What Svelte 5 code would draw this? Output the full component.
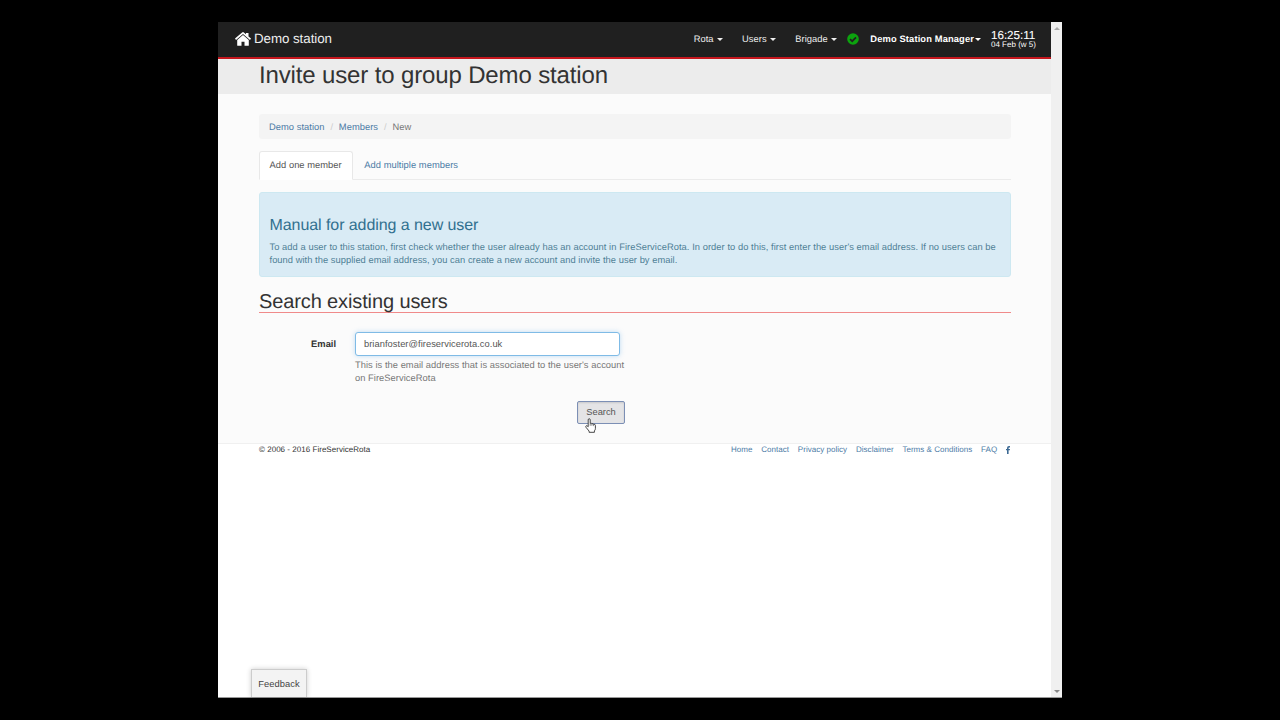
<script lang="ts">
  const menus = ['Rota', 'Users', 'Brigade'];
  const links = ['Home', 'Contact', 'Privacy policy', 'Disclaimer', 'Terms & Conditions', 'FAQ'];
  let email = $state('brianfoster@fireservicerota.co.uk');
</script>

<div class="stage">
  <div class="window">
    <div class="page">
      <header>
        <a class="brand" href="#home">
          <svg class="house" viewBox="0 0 16 14" width="16" height="14">
            <path fill="#fff" d="M8 3 2.2 7.9v5.3q0 .6.6.6h3.7V9.8h3v4h3.7q.6 0 .6-.6V7.9z" />
            <path fill="#fff" d="M8 .1q.5 0 .9.3L11 2.2V1h2.5v3.4L16 6.6l-1 1.3L8 2.1 1 7.9 0 6.6 7.1.4Q7.5.1 8 .1z" />
          </svg>
          <span>Demo station</span>
        </a>
        <nav>
          {#each menus as m}
            <a class="menu {m.toLowerCase()}" href="#{m}">{m}<i class="caret"></i></a>
          {/each}
          <svg class="ok" viewBox="0 0 12 12" width="12" height="12">
            <circle cx="6" cy="6" r="5.8" fill="#0ca30e" />
            <path d="M3 6.1 5.2 8.2 9 4.4" fill="none" stroke="#202020" stroke-width="1.7" />
          </svg>
          <a class="account" href="#account"><span>Demo Station Manager</span><i class="caret"></i></a>
          <div class="clock"><span class="time">16:25:11</span><span class="date">04 Feb (w 5)</span></div>
        </nav>
      </header>

      <div class="title"><h1>Invite user to group Demo station</h1></div>

      <main>
        <ol class="crumbs">
          <li><a href="#station">Demo station</a></li>
          <li class="sep">/</li>
          <li><a href="#members">Members</a></li>
          <li class="sep">/</li>
          <li>New</li>
        </ol>

        <div class="tabs">
          <a class="tab active" href="#one">Add one member</a>
          <a class="tab" href="#multiple">Add multiple members</a>
        </div>

        <section class="info">
          <h3>Manual for adding a new user</h3>
          <p>
            <span class="wide">To add a user to this station, first check whether the user already has an account in FireServiceRota. In order to do this, first enter the user's email address. If no users can be</span><br />
            <span>found with the supplied email address, you can create a new account and invite the user by email.</span>
          </p>
        </section>

        <h2>Search existing users</h2>

        <form>
          <label for="email">Email</label>
          <div class="field">
            <input id="email" type="text" bind:value={email} />
            <p>This is the email address that is associated to the user's account<br />on FireServiceRota</p>
            <div class="action">
              <button type="button">Search</button>
              <svg class="pointer" viewBox="0 0 12 15" width="12" height="15">
                <path d="M3.2 8.8V1.9q0-1.2 1-1.2t1 1.2v3.4q1.3-.5 1.7.5 1.2-.5 1.7.5 1.6-.3 1.8 1.1v3.1q0 1.3-1 2.4v1.4H4.1v-1.2L1 9.3Q.4 8 1.3 7.7q.8-.2 1.9 1.1z" fill="#fff" stroke="#333" stroke-width=".9" stroke-linejoin="round" />
                <path d="M5.2 5.3v2.5M6.9 5.8v2M8.6 6.3v1.8" stroke="#555" stroke-width=".7" />
              </svg>
            </div>
          </div>
        </form>
      </main>

      <footer>
        <span class="copy">© 2006 - 2016 FireServiceRota</span>
        <div class="links">
          {#each links as l}<a href="#{l}">{l}</a>{/each}
          <svg viewBox="0 0 4 8" width="4" height="8"><path fill="#3d6a94" d="M1 8V4.3H0V2.9h1V2Q1 0 3 0h1v1.4h-.8q-.6 0-.6.7v.8H4l-.2 1.4H2.6V8z" /></svg>
        </div>
      </footer>
      <button class="feedback" type="button">Feedback</button>
    </div>
    <div class="scroll">
      <i class="up"></i>
      <i class="down"></i>
    </div>
  </div>
</div>

<style>
  :global(body) { margin: 0; background: #000; }
  .stage {
    box-sizing: border-box; width: 1280px; height: 720px; padding: 22px 0 0 218px;
    background: #000; overflow: hidden;
    font: 9.33px/13.33px "Liberation Sans", Arial, sans-serif; color: #333;
    text-rendering: geometricPrecision;
  }
  * { box-sizing: border-box; }
  a { color: #4c7ba6; text-decoration: none; white-space: nowrap; }
  h1, h2, h3, p, ol { margin: 0; padding: 0; font-weight: normal; }
  .window { display: flex; width: 844px; height: 676px; background: #fff; border-bottom: 1px solid #999; }
  .page { position: relative; width: 833px; display: flex; flex-direction: column; }
  .scroll { width: 11px; background: #f0f0f0; display: flex; flex-direction: column; justify-content: space-between; align-items: center; padding: 5px 0 4px; }
  .up, .down { border: 3px solid transparent; width: 0; height: 0; }
  .up { border-top: 0; border-bottom-color: #aaa; }
  .down { border-bottom: 0; border-top-color: #888; }

  header { height: 37px; flex: none; background: #202020; border-bottom: 2px solid #c5161d; display: flex; justify-content: space-between; padding: 0 14px 0 17px; }
  header a { color: #eee; }
  .brand { display: flex; align-items: center; gap: 3px; font-size: 13.33px; height: 34px; letter-spacing: -.05px; }
  .house { margin: -1px 0 0; }
  nav { display: flex; align-items: center; height: 35px; }
  .menu { display: flex; align-items: center; gap: 3px; margin-right: 19.5px; letter-spacing: .06px; }
  .brigade { margin-right: 10.5px; }
  .ok { margin-top: -1px; }
  .caret { border: 3px solid transparent; border-top-color: currentColor; border-bottom: 0; margin-top: 1px; }
  .account { display: flex; align-items: center; gap: 1px; font-weight: bold; margin: 0 10px 0 11px; color: #fff; letter-spacing: .13px; }
  .clock { color: #fff; display: flex; flex-direction: column; width: 46px; white-space: nowrap; }
  .time { font-size: 11.6px; line-height: 11px; -webkit-text-stroke: .1px #fff; }
  .date { font-size: 8px; line-height: 8px; }

  .title { height: 35px; flex: none; background: #ececec; padding-left: 41px; }
  h1 { font-size: 24px; line-height: 34px; white-space: nowrap; letter-spacing: -.14px; }

  main { height: 350px; flex: none; background: #fbfbfb; border-bottom: 1px solid #f0f0f0; padding: 20px 40px 0 41px; }
  .crumbs { list-style: none; display: flex; background: #f4f4f4; height: 25px; align-items: center; padding: 2px 10px 0; border-radius: 3px; color: #777; letter-spacing: .05px; }
  .sep { color: #ccc; width: 14.3px; text-align: center; }
  .tabs { display: flex; margin-top: 12px; height: 29px; border-bottom: 1px solid #ebebeb; }
  .tab { padding: 7px 10px 0 9.5px; height: 29px; border: 1px solid transparent; border-radius: 3px 3px 0 0; margin-right: 1px; letter-spacing: .05px; }
  .active { background: #fff; border-color: #e8e8e8; border-bottom-color: #fff; color: #555; }
  .info { margin-top: 12px; height: 85px; background: #d9ebf5; border: 1px solid #cde8f1; border-radius: 3px; padding: 24px 9px 0 9.5px; color: #4f7f96; }
  h3 { font-size: 16px; line-height: 18px; color: #31708f; margin-bottom: 6px; letter-spacing: -.07px; }
  .info p { white-space: nowrap; letter-spacing: .04px; }
  .info .wide { letter-spacing: .056px; }
  h2 { margin-top: 14px; height: 22px; font-size: 20px; line-height: 22px; border-bottom: 1px solid #f08a8a; letter-spacing: -.12px; }
  form { display: flex; padding-top: 19px; }
  label { width: 77px; text-align: right; margin-right: 19px; font-weight: bold; line-height: 24px; }
  .field { width: 270px; }
  input { display: block; width: 265px; height: 24px; font: inherit; color: #555; padding: 0 8px; border: 1px solid #7fbbe6; border-radius: 3px; background: #fff; box-shadow: 0 0 5px rgba(102, 175, 233, .4); outline: 0; letter-spacing: .04px; }
  .field p { margin-top: 3px; color: #777; white-space: nowrap; letter-spacing: .045px; }
  .action { position: relative; display: flex; justify-content: flex-end; margin-top: 15px; }
  .action button { width: 48px; height: 23px; font: inherit; color: #555; padding: 1px 0 0; background: #e4e4e6; border: 1px solid #7c8fb5; border-radius: 2px; box-shadow: inset 0 1px 2px rgba(0, 0, 0, .12); }
  .pointer { position: absolute; right: 28px; top: 17px; }
  footer { display: flex; justify-content: space-between; padding: 0 41px; font-size: 8px; line-height: 11px; letter-spacing: .03px; }
  .links { display: flex; align-items: center; gap: 8.8px; }
  .feedback { position: absolute; left: 33px; bottom: 0; width: 56px; height: 28px; padding: 2px 0 0; font: inherit; letter-spacing: .08px; color: #444; background: #f3f3f3; border: 1px solid #ccc; border-bottom: 0; box-shadow: 0 0 5px rgba(0, 0, 0, .2); }
</style>
